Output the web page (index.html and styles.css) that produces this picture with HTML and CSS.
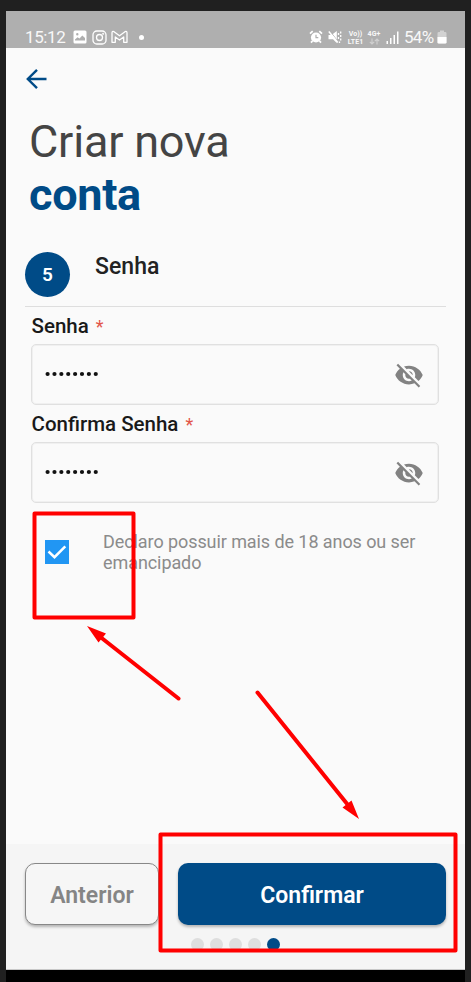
FILE: index.html
```html
<!DOCTYPE html>
<html lang="pt-BR">
<head>
<meta charset="utf-8">
<title>Criar nova conta</title>
<link rel="stylesheet" href="styles.css">
</head>
<body>
<div class="phone">
  <header class="status">
    <span class="clock">15:12</span>
    <svg class="s-photo" width="14" height="14" viewBox="0 0 14 14"><path fill="#fff" fill-rule="evenodd" d="M2 .5h10A1.500 1.500 0 0 1 13.500 2v10a1.500 1.500 0 0 1-1.500 1.500H2A1.500 1.500 0 0 1 .5 12V2A1.500 1.500 0 0 1 2 .5zM2 10.500h10V8L9.300 5.500 6.500 8.500 4.500 7.200 2 9.500zM4.300 3a1.200 1.200 0 1 0 0 2.400 1.200 1.200 0 0 0 0-2.400z"/></svg>
    <svg class="s-insta" width="15" height="15" viewBox="0 0 15 15" fill="none" stroke="#fff" stroke-width="1.300"><rect x="1" y="1" width="13" height="13" rx="3.800"/><circle cx="7.500" cy="7.500" r="3"/><circle cx="11.200" cy="3.800" r=".4"/></svg>
    <svg class="s-mail" width="17" height="14" viewBox="0 0 17 14" fill="none" stroke="#fff" stroke-width="1.300" stroke-linejoin="round"><path d="M1 12.300V3Q1 .8 3 1.700L8.500 5.800 14 1.700Q16 .8 16 3V12.300H12.700V7L8.500 10 4.300 7V12.300z"/></svg>
    <i class="s-dot"></i>
    <svg class="s-alarm" width="14" height="14" viewBox="0 0 14 14"><circle cx="7" cy="7.500" r="5.100" fill="#fff"/><path d="M1 3.600L3.700 1.200M13 3.600L10.300 1.200M3.500 11L2 12.700M10.500 11L12 12.700" stroke="#fff" stroke-width="1.800"/><path d="M7 4.700V7.700H9.300" fill="none" stroke="#afafaf" stroke-width="1.200"/></svg>
    <svg class="s-mute" width="14" height="14" viewBox="0 0 14 14"><path d="M.5 5h3L8.800 1v12L5 9.300H.5z" fill="#fff"/><path d="M1.800 .8l8 10.500" stroke="#afafaf" stroke-width="1"/><path d="M.8 1.500l9 11" stroke="#fff" stroke-width="1.500"/><path d="M10.500 3v2M10.500 7v2M12.700 1.500v2M12.700 5v2M12.700 8.500v2M11.500 11.500v1.500" fill="none" stroke="#fff" stroke-width="1.300"/></svg>
    <span class="net volte"><b>Vo))</b><b>LTE1</b></span>
    <span class="net data"><b>4G+</b><svg width="11" height="7" viewBox="0 0 11 7" fill="none" stroke="#d0d0d0" stroke-width="1.100"><path d="M3 .5V6M.8 3.800L3 6 5.200 3.800M8 6.500V1M5.800 3.200L8 1 10.200 3.200"/></svg></span>
    <svg class="s-signal" width="13" height="13" viewBox="0 0 13 13" fill="#fff"><path d="M.5 10h1.500v3H.5zM4 7h1.500v6H4zM7.500 4H9v9H7.500zM11 .5h1.500V13H11z"/></svg>
    <span class="percent">54%</span>
    <svg class="s-battery" width="10" height="14" viewBox="0 0 10 14"><path d="M3 .5h4V2h1.200Q9.500 2 9.500 3.300V12.200Q9.500 13.500 8.200 13.500H1.800Q.5 13.500 .5 12.200V3.300Q.5 2 1.800 2H3z" fill="#d2d2d2"/><path d="M.5 7h9v5.200q0 1.300-1.300 1.300H1.800Q.5 13.500.5 12.200z" fill="#fff"/></svg>
  </header>

  <main class="content">
    <svg class="back" width="22" height="22" viewBox="0 0 22 22" fill="none" stroke="#004b87" stroke-width="2.400"><path d="M20.500 11H2.500M11 1.800L1.800 11l9.200 9.200"/></svg>
    <h1 class="title">Criar nova<strong>conta</strong></h1>
    <div class="step"><span class="step-number">5</span><h2>Senha</h2></div>
    <form class="fields">
      <label>Senha <em>*</em></label>
      <div class="input"><svg class="bullets" width="56" height="6" viewBox="0 0 56 6" fill="none" stroke="#111" stroke-width="4.200" stroke-linecap="round"><path d="M2.600 3h48.500" stroke-dasharray="0 6.880"/></svg>
        <svg width="30" height="30" viewBox="0 0 24 24" fill="#828282"><path d="M12 7c2.760 0 5 2.240 5 5 0 .65-.13 1.260-.36 1.830l2.920 2.920c1.510-1.260 2.700-2.890 3.430-4.750-1.730-4.390-6-7.500-11-7.500-1.400 0-2.740.25-3.980.7l2.160 2.160C10.740 7.130 11.350 7 12 7zM2 4.270l2.280 2.280.46.46C3.080 8.300 1.780 10.020 1 12c1.730 4.390 6 7.500 11 7.500 1.550 0 3.030-.3 4.380-.84l.42.42L19.730 22 21 20.730 3.270 3 2 4.270zM7.530 9.800l1.550 1.550c-.05.21-.08.43-.08.65 0 1.660 1.340 3 3 3 .22 0 .44-.03.65-.08l1.550 1.550c-.67.33-1.410.53-2.200.53-2.760 0-5-2.240-5-5 0-.79.2-1.530.53-2.200zm4.310-.78l3.150 3.150.02-.16c0-1.660-1.340-3-3-3l-.17.01z"/></svg></div>
      <label>Confirma Senha <em>*</em></label>
      <div class="input"><svg class="bullets" width="56" height="6" viewBox="0 0 56 6" fill="none" stroke="#111" stroke-width="4.200" stroke-linecap="round"><path d="M2.600 3h48.500" stroke-dasharray="0 6.880"/></svg>
        <svg width="30" height="30" viewBox="0 0 24 24" fill="#828282"><path d="M12 7c2.760 0 5 2.240 5 5 0 .65-.13 1.260-.36 1.830l2.920 2.920c1.510-1.260 2.700-2.890 3.430-4.750-1.730-4.390-6-7.500-11-7.500-1.400 0-2.740.25-3.980.7l2.160 2.160C10.740 7.130 11.350 7 12 7zM2 4.270l2.280 2.280.46.46C3.080 8.300 1.780 10.020 1 12c1.730 4.390 6 7.500 11 7.500 1.550 0 3.030-.3 4.380-.84l.42.42L19.730 22 21 20.730 3.270 3 2 4.270zM7.530 9.800l1.550 1.550c-.05.21-.08.43-.08.65 0 1.660 1.340 3 3 3 .22 0 .44-.03.65-.08l1.550 1.550c-.67.33-1.410.53-2.200.53-2.760 0-5-2.240-5-5 0-.79.2-1.530.53-2.200zm4.310-.78l3.150 3.150.02-.16c0-1.660-1.340-3-3-3l-.17.01z"/></svg></div>
      <div class="consent">
        <svg width="24" height="24" viewBox="0 0 24 24"><path fill="#2196f3" d="M0 0h24v24H0z"/><path d="M3.500 11.500l6 5.700L20.300 6.300" fill="none" stroke="#fff" stroke-width="2.500"/></svg>
        <p>Declaro possuir mais de 18 anos ou ser<br>emancipado</p>
      </div>
    </form>
  </main>

  <footer class="footer">
    <div class="actions">
      <button class="prev">Anterior</button>
      <button class="confirm">Confirmar</button>
    </div>
    <div class="pages"><i></i><i></i><i></i><i></i><i class="current"></i></div>
  </footer>
</div>

<svg class="marks" width="471" height="982" viewBox="0 0 471 982" fill="none" stroke="#f00" stroke-width="4" stroke-linejoin="round" stroke-linecap="round">
  <rect x="34.500" y="513.500" width="99" height="104"/>
  <rect x="160.500" y="834.500" width="295" height="116"/>
  <path d="M178.500 698.500L101 637.500M257.500 692.500L348 805"/>
  <path d="M87 626l19 7.500-7.500 9zM359 819l-16.500-11.500 9-7z" fill="#f00" stroke="none"/>
</svg>
</body>
</html>
```
FILE: styles.css
```css
* { box-sizing: border-box; }
body {
  margin: 0;
  height: 982px;
  padding: 11px 6px 0;
  overflow: hidden;
  background: #202020;
  font-family: Roboto, "Liberation Sans", sans-serif;
}
.phone {
  height: 971px;
  display: flex;
  flex-direction: column;
  background: #000;
}
.status {
  height: 37px;
  flex: none;
  display: flex;
  align-items: center;
  padding: 15px 18px 0 19px;
  background: #afafaf;
  color: #f8f8f8;
  line-height: 1;
}
.clock, .percent { font-size: 17px; }
.clock { width: 48px; letter-spacing: -.4px; }
.percent { width: 33px; letter-spacing: -.7px; white-space: nowrap; }
.status svg { flex: none; }
.s-insta { margin-left: 5px; }
.s-mail { margin-left: 4px; }
.s-dot { width: 5px; height: 5px; border-radius: 50%; background: #fff; margin-left: 11px; }
.s-alarm { margin-left: auto; }
.s-mute { margin-left: 5px; }
.net { display: flex; flex-direction: column; align-items: center; height: 15px; }
.net b { font-size: 7px; line-height: 8px; font-weight: 700; letter-spacing: .1px; white-space: nowrap; }
.volte { width: 17px; margin-left: 5px; }
.data { width: 14px; margin-left: 3px; }
.s-signal { margin: 0 5px; }

.content {
  height: 796px;
  flex: none;
  display: flex;
  flex-direction: column;
  padding: 20px 19px 0 19px;
  background: #fafafa;
}
.back { flex: none; margin-left: 1px; }
.title {
  margin: 25px 0 0 4px;
  color: #444;
  font-size: 45px;
  line-height: 53px;
  font-weight: 400;
  letter-spacing: -.2px;
}
.title strong { display: block; color: #004b87; font-weight: 700; letter-spacing: -.3px; }
.step {
  height: 86px;
  display: flex;
  align-items: flex-end;
  padding-bottom: 9px;
  border-bottom: 1px solid #dedede;
}
.step-number {
  width: 45px;
  height: 45px;
  border-radius: 50%;
  background: #004b87;
  color: #fff;
  font-size: 19px;
  font-weight: 600;
  line-height: 45px;
  text-align: center;
}
.step h2 {
  margin: 0 0 17px 25px;
  color: #222;
  font-size: 23px;
  font-weight: 500;
  line-height: 27px;
  letter-spacing: .05px;
}
.fields { display: flex; flex-direction: column; padding: 0 7px 0 6px; }
.fields label {
  height: 37px;
  padding: 7px 0 0 .5px;
  color: #191919;
  font-size: 20.500px;
  font-weight: 500;
  line-height: 24px;
}
.fields em { color: #e25549; font-size: 18px; font-style: normal; font-weight: 400; margin-left: 2px; }
.input {
  height: 61px;
  display: flex;
  align-items: center;
  justify-content: space-between;
  padding: 0 14px 0 13px;
  border: 1px solid #e0e0e0;
  box-shadow: inset 0 0 0 1px #f0f0f0;
  border-radius: 5px;
}
.bullets { margin-top: -2px; }
.consent { display: flex; gap: 34px; padding: 29px 0 0 14px; }
.consent svg { flex: none; margin-top: 8px; }
.consent p {
  margin: 0;
  color: #8b8b8b;
  font-size: 18px;
  line-height: 20.500px;
  letter-spacing: -.08px;
  white-space: nowrap;
}
.footer {
  height: 126px;
  flex: none;
  padding: 19px 19px 0;
  background: #f5f5f5;
  border-bottom: 1px solid #c8c8c8;
}
.actions { display: flex; gap: 19px; }
.actions button {
  height: 62px;
  padding: 3px 0 0;
  border: 0;
  border-radius: 10px;
  font: 600 23px/59px Roboto, sans-serif;
  box-shadow: 0 2px 3px #0004;
}
.actions .prev {
  width: 134px;
  border: 1px solid #888;
  background: #f6f6f6;
  color: #858585;
  line-height: 57px;
}
.actions .confirm { width: 268px; background: #004b87; color: #fff; }
.pages { display: flex; gap: 6.100px; padding: 13px 0 0 166px; }
.pages i { width: 13px; height: 13px; border-radius: 50%; background: #dedede; }
.pages .current { background: #004b87; }
.marks { position: absolute; top: 0; left: 0; }
```
